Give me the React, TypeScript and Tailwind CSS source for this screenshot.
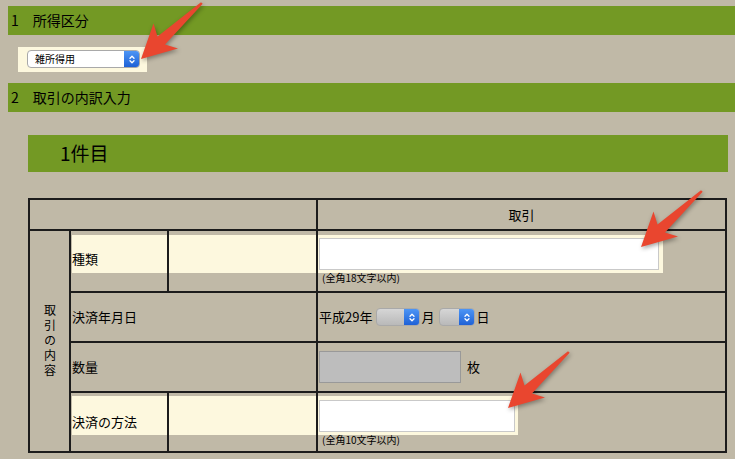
import React from "react";

const Chevrons = () => (
  <svg width="8" height="11" viewBox="0 0 8 11" fill="none" stroke="white" strokeWidth="1.3" strokeLinecap="round" strokeLinejoin="round">
    <path d="M2 4.2 L4 2.2 L6 4.2" />
    <path d="M2 6.8 L4 8.8 L6 6.8" />
  </svg>
);

function MacSelect({ width, label, white }: { width: number; label?: string; white?: boolean }) {
  return (
    <div
      className={`flex h-[18px] overflow-hidden rounded-[4px] border border-[#a9a9a9] ${white ? "bg-white" : "bg-gradient-to-b from-[#d6d6d6] to-[#b9b9b9]"}`}
      style={{ width }}
    >
      <div className="flex flex-1 items-center pl-[7px] text-[10px] leading-none text-black">{label}</div>
      <div className="flex w-[15px] items-center justify-center bg-gradient-to-b from-[#4d95f5] to-[#1f61d6]">
        <Chevrons />
      </div>
    </div>
  );
}

function Arrow({ left, top }: { left: number; top: number }) {
  return (
    <svg
      className="absolute drop-shadow-[1px_2px_2px_rgba(0,0,0,0.35)]"
      style={{ left, top }}
      width="66"
      height="62"
      viewBox="0 0 66 62"
    >
      <polygon points="1,57 13.5,21.5 17.5,34.5 61,0.3 62.7,1.7 25,42.5 38,46.5" fill="#e9462f" />
    </svg>
  );
}

export default function App() {
  return (
    <div className="relative h-[459px] w-[735px] overflow-hidden bg-[#c0b9a7] pt-[6px] font-['Noto_Sans_CJK_JP',sans-serif] text-[13px] text-black">
      <div className="ml-[8px] flex h-[29px] items-center bg-[#739924] pl-[3px] text-[14px]">1　所得区分</div>

      <div className="ml-[18px] mt-[12px] h-[25px] w-[129px] bg-[#fdf8de] pl-[9px] pt-[3px]">
        <MacSelect width={113} label="雑所得用" white />
      </div>

      <div className="ml-[8px] mt-[11px] flex h-[29px] items-center bg-[#739924] pl-[3px] text-[14px]">2　取引の内訳入力</div>

      <div className="ml-[28px] mt-[23px] flex h-[37px] w-[700px] items-center bg-[#739924] pl-[32px] text-[19px]">1件目</div>

      <div className="ml-[28px] mt-[26px] grid w-[699px] grid-cols-[39px_96px_147px_407px] grid-rows-[29px_60px_48px_48px_58px] gap-[2px] bg-[#1c1c1c] p-[2px]">
        <div className="col-span-3 bg-[#c0b9a7]" />
        <div className="flex items-center justify-center bg-[#c0b9a7]">取引</div>

        <div className="row-span-4 flex items-center justify-center bg-[#c0b9a7]">
          <span className="text-[12px] leading-[14px] tracking-[3px] [text-orientation:upright] [writing-mode:vertical-rl]">取引の内容</span>
        </div>

        {/* 種類 */}
        <div className="bg-[#c0b9a7] pl-[1px] pt-[4px]">
          <div className="h-[38px] bg-[#fdf8de] pt-[16px] leading-[16px]">種類</div>
        </div>
        <div className="bg-[#c0b9a7] pt-[4px]">
          <div className="h-[38px] bg-[#fdf8de]" />
        </div>
        <div className="bg-[#c0b9a7] pt-[4px]">
          <div className="h-[38px] w-[345px] bg-[#fdf8de] pl-[1px] pt-[3px]">
            <div className="h-[32px] w-[340px] border border-[#c9c9c9] bg-white" />
          </div>
          <div className="pl-[4px] text-[10px] leading-[10px]">(全角18文字以内)</div>
        </div>

        {/* 決済年月日 */}
        <div className="col-span-2 flex items-center bg-[#c0b9a7] pl-[1px]">決済年月日</div>
        <div className="flex items-center bg-[#c0b9a7] pl-[1px]">
          <span>平成29年</span>
          <div className="ml-[4px]">
            <MacSelect width={44} />
          </div>
          <span className="ml-[1px]">月</span>
          <div className="ml-[5px]">
            <MacSelect width={36} />
          </div>
          <span className="ml-[1px]">日</span>
        </div>

        {/* 数量 */}
        <div className="col-span-2 flex items-center bg-[#c0b9a7] pl-[1px]">数量</div>
        <div className="flex items-center bg-[#c0b9a7] pl-[1px]">
          <div className="h-[32px] w-[142px] border border-[#999] bg-[#bdbdbd]" />
          <span className="ml-[6px]">枚</span>
        </div>

        {/* 決済の方法 */}
        <div className="bg-[#c0b9a7] pl-[1px] pt-[3px]">
          <div className="h-[39px] bg-[#fdf8de] pt-[18px] leading-[16px]">決済の方法</div>
        </div>
        <div className="bg-[#c0b9a7] pt-[3px]">
          <div className="h-[39px] bg-[#fdf8de]" />
        </div>
        <div className="bg-[#c0b9a7] pt-[3px]">
          <div className="h-[39px] w-[200px] bg-[#fdf8de] pl-[1px] pt-[4px]">
            <div className="h-[32px] w-[196px] border border-[#c9c9c9] bg-white" />
          </div>
          <div className="pl-[4px] text-[10px] leading-[10px]">(全角10文字以内)</div>
        </div>
      </div>

      <Arrow left={140} top={2} />
      <Arrow left={640} top={190} />
      <Arrow left={507} top={351} />
    </div>
  );
}
